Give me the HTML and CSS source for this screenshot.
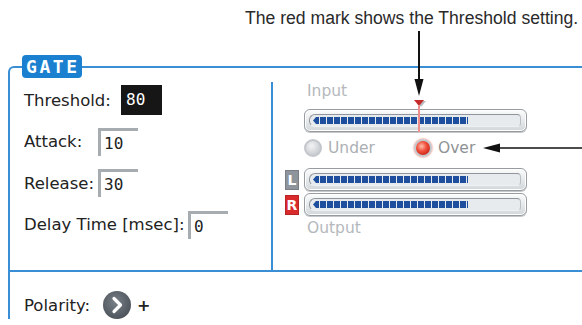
FILE: index.html
```html
<!doctype html>
<html lang="en">
<head>
	<meta charset="utf-8">
	<title>Gate</title>
<link rel="stylesheet" href="styles.css">
</head>
<body>
<div class="page">
	<p class="caption">The red mark shows the Threshold setting.</p>

	<!-- callout arrows lie over the screen -->
	<svg class="callout callout-down" width="14" height="68" viewBox="0 0 14 68">
		<line x1="7" y1="0" x2="7" y2="52" stroke="#111" stroke-width="2"/>
		<polygon points="2.5,48 11.5,48 7,65" fill="#111"/>
	</svg>
	<svg class="callout callout-left" width="102" height="16" viewBox="0 0 102 16">
		<line x1="14" y1="8" x2="102" y2="8" stroke="#111" stroke-width="1.6"/>
		<polygon points="1,8 18,3.5 18,12.5" fill="#111"/>
	</svg>

	<section class="panel">
		<span class="badge">GATE</span>

		<div class="panel-top">
			<div class="params">
				<div class="row">
					<span class="label label-thr">Threshold:</span>
					<span class="value value-sel">80</span>
				</div>
				<div class="row">
					<span class="label">Attack:</span>
					<span class="value">10</span>
				</div>
				<div class="row">
					<span class="label">Release:</span>
					<span class="value">30</span>
				</div>
				<div class="row">
					<span class="label label-delay">Delay Time [msec]:</span>
					<span class="value">0</span>
				</div>
			</div>

			<div class="divider"></div>

			<div class="meters">
				<div class="mlabel mlabel-in">Input</div>
				<div class="meter-row meter-row-in">
					<span class="ch ch-none"></span>
					<div class="meter">
						<span class="thr-mark"></span>
						<span class="thr-line"></span>
						<div class="track"><div class="fill"></div></div>
					</div>
				</div>
				<div class="radios">
					<span class="radio-item">
						<span class="radio"></span>
						<span class="radio-text">Under</span>
					</span>
					<span class="radio-item">
						<span class="radio radio-on"></span>
						<span class="radio-text radio-text-on">Over</span>
					</span>
				</div>
				<div class="meter-row meter-row-l">
					<span class="ch ch-l">L</span>
					<div class="meter">
						<div class="track"><div class="fill"></div></div>
					</div>
				</div>
				<div class="meter-row meter-row-r">
					<span class="ch ch-r">R</span>
					<div class="meter">
						<div class="track"><div class="fill"></div></div>
					</div>
				</div>
				<div class="mlabel mlabel-out">Output</div>
			</div>
		</div>

		<div class="panel-bottom">
			<span class="label label-pol">Polarity:</span>
			<span class="knob">
				<svg width="28" height="28" viewBox="0 0 28 28">
					<polyline points="11,7.5 17.5,14 11,20.5" fill="none" stroke="#fff" stroke-width="3.2" stroke-linecap="round" stroke-linejoin="round"/>
				</svg>
			</span>
			<span class="label plus">+</span>
		</div>
	</section>
</div>
</body>
</html>
```

FILE: styles.css
```css
body {
	margin: 0;
	background: #fff;
	color: #222;
	font-family: "DejaVu Sans", sans-serif;
	overflow: hidden;
}

.page {
	position: relative;
	width: 582px;
	height: 325px;
	overflow: hidden;
}

.caption {
	margin: 0;
	height: 66px;
	box-sizing: border-box;
	padding: 7px 0 0 245px;
	font-family: "Liberation Sans", Arial, sans-serif;
	font-size: 17.6px;
	line-height: 22px;
	color: #2a2a2a;
	white-space: nowrap;
}

.callout {
	position: absolute;
	z-index: 2;
}

.callout-down {
	left: 412px;
	top: 31px;
}

.callout-left {
	left: 482px;
	top: 140px;
}

/* frame */

.panel {
	position: relative;
	width: 620px;
	margin-left: 8px;
	border-top: 2px solid #3a8ed5;
	border-left: 2px solid #3a8ed5;
	border-top-left-radius: 6px;
}

.badge {
	position: absolute;
	left: 12px;
	top: -13px;
	width: 60px;
	height: 23px;
	box-sizing: border-box;
	padding-left: 4px;
	border-radius: 4px;
	background: #1b80cf;
	color: #fff;
	font-family: "DejaVu Sans Mono", monospace;
	font-weight: bold;
	font-size: 18px;
	line-height: 23px;
	letter-spacing: 2.6px;
}

.panel-top {
	display: grid;
	grid-template-columns: 261px 2px 1fr;
	height: 202px;
	border-bottom: 2px solid #3a8ed5;
}

.divider {
	margin-top: 14px;
	background: #3a8ed5;
}

/* parameters */

.params {
	display: flex;
	flex-direction: column;
	gap: 11.5px;
	padding: 17px 0 0 14px;
}

.row {
	display: flex;
	align-items: center;
	height: 30px;
}

.label {
	font-size: 16.5px;
	color: #222;
	white-space: nowrap;
}

.params .label {
	width: 74px;
}

.params .label-thr {
	width: 97px;
}

.params .label-delay {
	width: 164px;
}

.value {
	box-sizing: border-box;
	width: 40px;
	height: 28px;
	padding: 3px 0 0 3px;
	border-top: 3px solid #a7acb1;
	border-left: 3px solid #a7acb1;
	font-family: "DejaVu Sans Mono", monospace;
	font-size: 16px;
	line-height: 20px;
	color: #222;
}

.value-sel {
	width: 41px;
	height: 30px;
	padding: 5px 0 0 5px;
	border: none;
	background: #161616;
	color: #fff;
}

/* meters */

.meters {
	display: flex;
	flex-direction: column;
	padding-left: 12px;
}

.mlabel {
	padding-left: 22px;
	font-size: 15.5px;
	line-height: 14px;
	color: #b4b8bc;
}

.mlabel-in {
	margin-top: 16px;
}

.mlabel-out {
	margin-top: 5px;
}

.meter-row {
	display: flex;
	align-items: center;
	gap: 5px;
}

.meter-row-in {
	margin-top: 11px;
}

.meter-row-l {
	margin-top: 11px;
}

.meter-row-r {
	margin-top: 2px;
}

.ch {
	width: 14px;
	height: 20px;
	box-sizing: border-box;
	border: 1px solid rgba(0, 0, 0, 0.15);
	color: #fff;
	font-weight: bold;
	font-size: 14px;
	line-height: 18px;
	text-align: center;
}

.ch-none {
	border: none;
}

.ch-l {
	background: #8d949b;
}

.ch-r {
	background: #d92b2b;
}

.meter {
	position: relative;
	width: 223px;
	height: 23px;
	box-sizing: border-box;
	padding: 4px 5px 0 4px;
	border: 1px solid #979ca1;
	border-radius: 6px;
	background: linear-gradient(#fbfcfc, #d3d7da);
	box-shadow: inset 0 0 0 1px #fff, 0 1px 0 #c4c8cb;
}

.track {
	height: 13px;
	box-sizing: border-box;
	padding: 2px 0 0 3px;
	border: 1px solid #8f959a;
	border-right-color: #b9bec2;
	border-bottom-color: #eef0f1;
	border-radius: 6px 4px 4px 6px;
	background: #e8ebed;
}

.fill {
	width: 155px;
	height: 7px;
	background: repeating-linear-gradient(90deg, #1e4f9e 0 6px, transparent 6px 7px);
	clip-path: polygon(3px 0, 100% 0, 100% 100%, 3px 100%, 0 50%);
}

.thr-mark {
	position: absolute;
	left: 109px;
	top: -10px;
	width: 0;
	height: 0;
	border-left: 5px solid transparent;
	border-right: 5px solid transparent;
	border-top: 6px solid #c62a2a;
	filter: drop-shadow(2px 1px 0 #b8bcc0);
}

.thr-line {
	position: absolute;
	left: 113px;
	top: -4px;
	width: 1.5px;
	height: 26px;
	background: #f08c8c;
	z-index: 1;
}

.radios {
	display: flex;
	align-items: center;
	height: 18px;
	margin-top: 7px;
	padding-left: 19px;
}

.radio-item {
	display: flex;
	align-items: center;
	gap: 6px;
	width: 110px;
}

.radio {
	width: 18px;
	height: 18px;
	box-sizing: border-box;
	border-radius: 50%;
	border: 2px solid #c3c7cb;
	background: radial-gradient(circle at 40% 35%, #f2f3f4, #c9cdd1 75%);
}

.radio-on {
	border-color: #c4c8cc;
	background: radial-gradient(circle at 40% 38%, #ffc0b0 0, #f2503c 40%, #c01c12 85%);
	box-shadow: 0 0 2px #e04030;
}

.radio-text {
	font-size: 15.5px;
	color: #acb0b4;
}

.radio-text-on {
	color: #8e9296;
}

/* polarity */

.panel-bottom {
	display: flex;
	align-items: center;
	padding: 19px 0 0 14px;
	height: 28px;
}

.panel-bottom .label-pol {
	width: 79px;
}

.knob {
	display: flex;
	width: 28px;
	height: 28px;
	margin-right: 6px;
	border-radius: 50%;
	background: radial-gradient(circle at 45% 40%, #7a8088, #4d535a 75%, #3d4248);
}

.plus {
	font-size: 16px;
	font-weight: bold;
}
```
